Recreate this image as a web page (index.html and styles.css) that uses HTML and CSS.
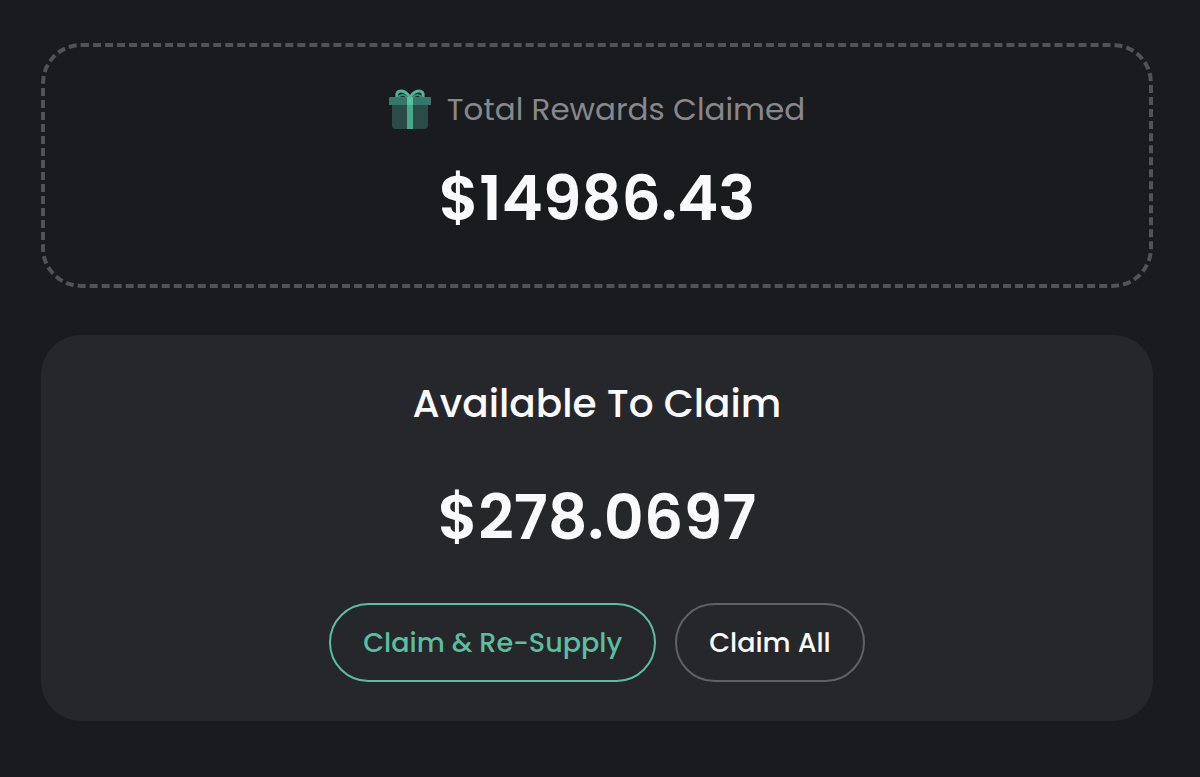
FILE: index.html
```html
<!DOCTYPE html>
<html lang="en">
<head>
<meta charset="utf-8">
<meta name="viewport" content="width=device-width, initial-scale=1">
<title>Rewards</title>
<link rel="stylesheet" href="styles.css">
</head>
<body>
<main class="rewards">
  <section class="claimed">
    <h2 class="claimed-label">
      <svg class="gift" viewBox="0 0 42 42" aria-hidden="true">
        <path d="M3 16h36v21q0 4-4 4H7q-4 0-4-4z" fill="#2a4b48"/>
        <path d="M0 10q0-1 1-1h40q1 0 1 1v7H0z" fill="#35776a"/>
        <path d="M8 9C7 5 9 3 12 3c4 0 7 3 9 7 2-4 5-7 9-7 3 0 5 2 4 6" fill="none" stroke="#53b597" stroke-width="3"/>
        <path d="M9 9q5-4 9 0M24 9q4-4 9 0" fill="none" stroke="#3d8c78" stroke-width="2"/>
        <path d="M18 9h6v32h-6z" fill="#48a88b"/>
        <path d="M18 9h6v8h-6z" fill="#5abf9f"/>
      </svg>
      <span>Total Rewards Claimed</span>
    </h2>
    <p class="amount">$14986.43</p>
  </section>
  <section class="available">
    <h2 class="available-label">Available To Claim</h2>
    <p class="amount">$278.0697</p>
    <div class="actions">
      <button class="button button-accent" type="button">Claim &amp; Re-Supply</button>
      <button class="button" type="button">Claim All</button>
    </div>
  </section>
</main>
</body>
</html>
```
FILE: styles.css
```css
* {
  box-sizing: border-box;
}

body {
  margin: 0;
  background: #1a1b1f;
  color: #fafafc;
  font-family: Poppins, Inter, sans-serif;
}

h2,
p {
  margin: 0;
}

.rewards {
  display: grid;
  gap: 47px;
  padding: 43px 47px 56px 41px;
}

.claimed,
.available {
  display: flex;
  flex-direction: column;
  align-items: center;
  border-radius: 40px;
}

.claimed {
  padding: 38px 32px 48px;
  border: 4px dashed #525357;
}

.claimed-label {
  display: flex;
  align-items: center;
  gap: 16px;
  margin-bottom: 28px;
  color: #87888b;
  font-size: 31px;
  font-weight: 400;
  line-height: 48px;
}

.gift {
  width: 42px;
  height: 42px;
}

.amount {
  font-size: 62px;
  font-weight: 600;
  line-height: 75px;
}

.available {
  padding: 41px 32px 39px;
  background: #26272b;
}

.available-label {
  margin-bottom: 48px;
  font-size: 39px;
  font-weight: 500;
  line-height: 56px;
}

.actions {
  display: flex;
  flex-wrap: wrap;
  justify-content: center;
  gap: 19px;
  margin-top: 48px;
}

.button {
  padding: 16px 32px;
  border: 2px solid #606165;
  border-radius: 40px;
  background: transparent;
  color: #fafafc;
  font: inherit;
  font-size: 27px;
  font-weight: 500;
  line-height: 43px;
  cursor: pointer;
}

.button-accent {
  border-color: #5abf9f;
  color: #5abf9f;
}
```
